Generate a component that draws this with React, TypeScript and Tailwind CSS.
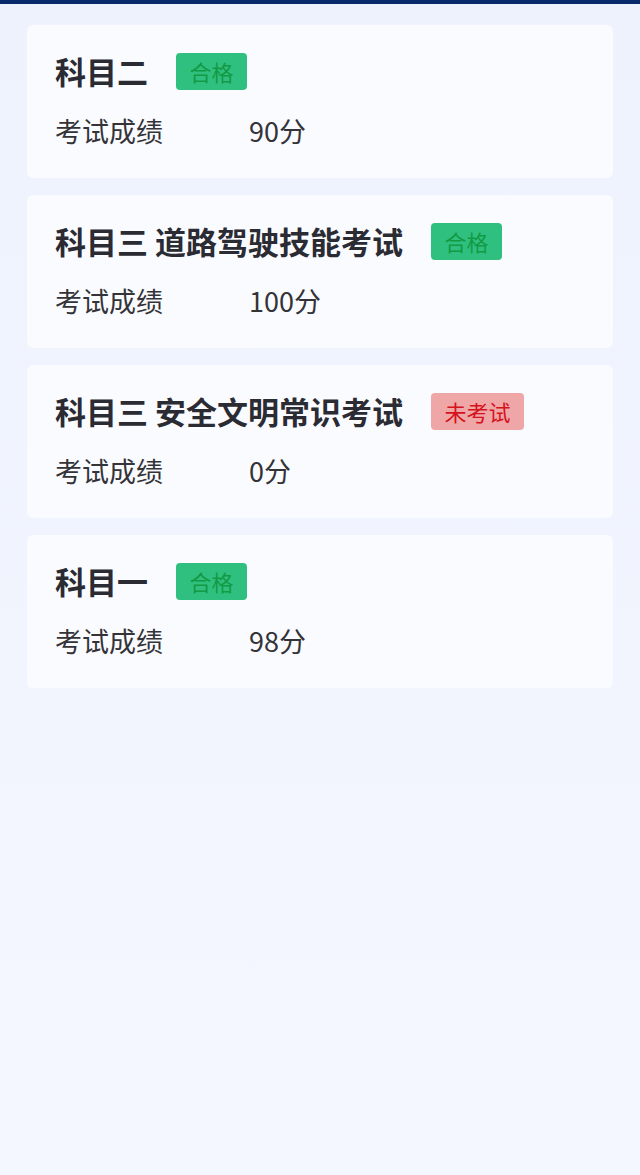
const exams = [
  { title: "科目二", status: "pass", score: "90分" },
  { title: "科目三 道路驾驶技能考试", status: "pass", score: "100分" },
  { title: "科目三 安全文明常识考试", status: "none", score: "0分" },
  { title: "科目一", status: "pass", score: "98分" },
];

function Badge({ status }: { status: string }) {
  if (status === "pass") {
    return (
      <span className="ml-[28px] inline-flex h-[37px] w-[71px] items-center justify-center rounded-[4px] bg-[#2fc07f] text-[22px] text-[#139a45]">
        合格
      </span>
    );
  }
  return (
    <span className="ml-[28px] inline-flex h-[37px] w-[93px] items-center justify-center rounded-[4px] bg-[#eea6a6] text-[22px] text-[#d5121d]">
      未考试
    </span>
  );
}

export default function App() {
  return (
    <div
      className="min-h-[1175px] bg-gradient-to-b from-[#eef2fd] to-[#f4f7ff] text-[#2b2b33]"
      style={{ fontFamily: '"Noto Sans CJK SC", "Noto Sans", sans-serif' }}
    >
      <div className="h-[4px] bg-[#08296b]" />
      <div className="flex flex-col gap-[17px] px-[27px] pt-[21px]">
        {exams.map((e, i) => (
          <div key={i} className="rounded-[6px] bg-[#fafbff] px-[28px] pt-[27px] pb-[29px]">
            <div className="flex h-[38px] items-center">
              <span className="text-[31px] font-bold leading-[38px]">{e.title}</span>
              <Badge status={e.status} />
            </div>
            <div className="mt-[23px] flex h-[36px] items-center text-[27px] leading-[36px] text-[#333338]">
              <span className="w-[194px]">考试成绩</span>
              <span>{e.score}</span>
            </div>
          </div>
        ))}
      </div>
    </div>
  );
}
